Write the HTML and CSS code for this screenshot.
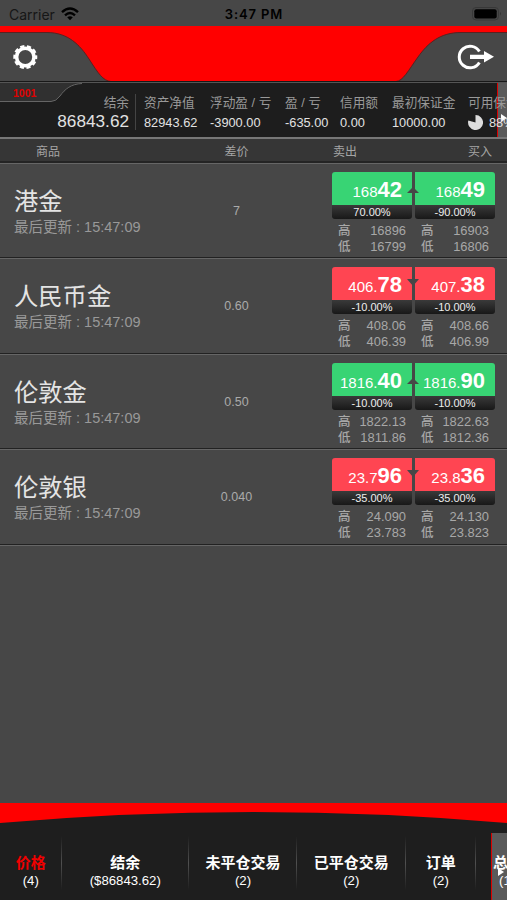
FILE: index.html
```html
<!DOCTYPE html>
<html lang="zh-CN">
<head>
    <meta charset="UTF-8">
    <title>价格</title>
    <link rel="stylesheet" href="styles.css">
</head>
<body>
    <div class="app">
        <div class="status">
            <div class="carrier">
                <span>Carrier</span>
                <svg width="18" height="14" viewBox="0 0 18 14">
                    <g fill="none" stroke="#000" stroke-width="2.4">
                        <path d="M1 5.2Q9 -2.2 17 5.2"/>
                        <path d="M4 8.3Q9 3.9 14 8.3"/>
                    </g>
                    <path d="M6.2 10.3Q9 8.2 11.8 10.3L9 13.2Z"/>
                </svg>
            </div>
            <div class="time">3:47 PM</div>
            <svg class="battery" width="30" height="14" viewBox="0 0 30 14">
                <rect x=".5" y=".5" width="26" height="12.5" rx="3.5" fill="none" stroke="#383838"/>
                <rect x="2.3" y="2.2" width="22.4" height="9.2" rx="2"/>
                <path d="M28 5Q30 6.7 28 8.4Z" fill="#333"/>
            </svg>
        </div>

        <div class="header">
            <svg width="507" height="57" viewBox="0 0 507 57">
                <rect width="507" height="57" fill="#f00"/>
                <path d="M-2 6.5H47C68 6.5 80 19 89 33C98 47 103 55 111 55.5V60H-2Z" fill="#474747" stroke="#5b2020"/>
                <path d="M509 6.5H461C440 6.5 428 17 418 31C408 45 403 55 396 55.5V60H509Z" fill="#474747" stroke="#5b2020"/>
                <rect y="55" width="507" height="1" fill="#181818"/>
                <rect y="56" width="507" height="1" fill="#555"/>
                <!-- 设置 -->
                <circle cx="25.3" cy="31" r="8.7" fill="none" stroke="#fff" stroke-width="3.6"/>
                <circle cx="25.3" cy="31" r="10.8" fill="none" stroke="#fff" stroke-width="2.4" stroke-dasharray="4.2 2.586" stroke-dashoffset="2.1"/>
                <!-- 退出 -->
                <path d="M479.4 25.6A10.8 10.8 0 1 0 479.4 36.4" fill="none" stroke="#fff" stroke-width="3"/>
                <path d="M470 28.7H484V25L494 30.8L484 36.6V32.9H470Z" fill="#fff"/>
            </svg>
        </div>

        <div class="account">
            <svg class="account-tab" width="84" height="20" viewBox="0 0 84 20">
                <path d="M-1 0H82C71 1 65 6 60 13Q56 18.5 51 18.5H-1Z" fill="#303030"/>
                <path d="M82 .5C71 1 65 6 60 13Q56 18.5 51 18.5H-1" fill="none" stroke="#656565"/>
            </svg>
            <span class="account-no">1001</span>
            <div class="balance"><p>结余</p><b>86843.62</b></div>
            <div class="item"><p>资产净值</p><b>82943.62</b></div>
            <div class="item"><p>浮动盈 / 亏</p><b>-3900.00</b></div>
            <div class="item"><p>盈 / 亏</p><b>-635.00</b></div>
            <div class="item"><p>信用额</p><b>0.00</b></div>
            <div class="item"><p>最初保证金</p><b>10000.00</b></div>
            <div class="item over">
                <p>可用保证金</p>
                <b class="usable"><svg width="15" height="15" viewBox="0 0 15 15"><path d="M7.5 7.5V0A7.5 7.5 0 1 1 .3 5.6Z" fill="#ddd"/></svg>88%</b>
            </div>
            <div class="more more-top"><i></i></div>
        </div>

        <div class="thead">
            <span>商品</span><span>差价</span><span>卖出</span><span>买入</span>
        </div>

        <div class="row">
            <div class="name"><h2>港金</h2><p>最后更新 : 15:47:09</p></div>
            <div class="spread">7</div>
            <div class="quotes up">
                <div class="quote">
                    <div class="price">168<b>42</b></div><div class="pct">70.00%</div>
                    <p><em>高</em>16896</p><p><em>低</em>16799</p>
                </div>
                <div class="quote">
                    <div class="price">168<b>49</b></div><div class="pct">-90.00%</div>
                    <p><em>高</em>16903</p><p><em>低</em>16806</p>
                </div>
            </div>
        </div>
        <div class="row">
            <div class="name"><h2>人民币金</h2><p>最后更新 : 15:47:09</p></div>
            <div class="spread">0.60</div>
            <div class="quotes down">
                <div class="quote">
                    <div class="price">406.<b>78</b></div><div class="pct">-10.00%</div>
                    <p><em>高</em>408.06</p><p><em>低</em>406.39</p>
                </div>
                <div class="quote">
                    <div class="price">407.<b>38</b></div><div class="pct">-10.00%</div>
                    <p><em>高</em>408.66</p><p><em>低</em>406.99</p>
                </div>
            </div>
        </div>
        <div class="row">
            <div class="name"><h2>伦敦金</h2><p>最后更新 : 15:47:09</p></div>
            <div class="spread">0.50</div>
            <div class="quotes up">
                <div class="quote">
                    <div class="price">1816.<b>40</b></div><div class="pct">-10.00%</div>
                    <p><em>高</em>1822.13</p><p><em>低</em>1811.86</p>
                </div>
                <div class="quote">
                    <div class="price">1816.<b>90</b></div><div class="pct">-10.00%</div>
                    <p><em>高</em>1822.63</p><p><em>低</em>1812.36</p>
                </div>
            </div>
        </div>
        <div class="row">
            <div class="name"><h2>伦敦银</h2><p>最后更新 : 15:47:09</p></div>
            <div class="spread">0.040</div>
            <div class="quotes down">
                <div class="quote">
                    <div class="price">23.7<b>96</b></div><div class="pct">-35.00%</div>
                    <p><em>高</em>24.090</p><p><em>低</em>23.783</p>
                </div>
                <div class="quote">
                    <div class="price">23.8<b>36</b></div><div class="pct">-35.00%</div>
                    <p><em>高</em>24.130</p><p><em>低</em>23.823</p>
                </div>
            </div>
        </div>

        <div class="footer">
            <svg width="507" height="30" viewBox="0 0 507 30">
                <rect width="507" height="30" fill="#1e1e1e"/>
                <path d="M0 0H507V20Q253.5 -2 0 20Z" fill="#f00"/>
            </svg>
            <div class="tabs">
                <a class="tab on"><b>价格</b><span>(4)</span></a>
                <a class="tab"><b>结余</b><span>($86843.62)</span></a>
                <a class="tab"><b>未平仓交易</b><span>(2)</span></a>
                <a class="tab"><b>已平仓交易</b><span>(2)</span></a>
                <a class="tab"><b>订单</b><span>(2)</span></a>
                <a class="tab last over"><b>总结</b><span>(1)</span></a>
                <div class="more"><i></i></div>
            </div>
        </div>
    </div>
</body>
</html>
```
FILE: styles.css
```css
*{
    margin: 0;
    padding: 0;
    box-sizing: border-box;
}
body{
    background-color: #474747;
    font-family: "Liberation Sans", "Noto Sans CJK SC", sans-serif;
    color: #aaa;
    overflow: hidden;
}
svg{
    display: block;
}
.app{
    width: 507px;
    height: 900px;
    display: flex;
    flex-direction: column;
    overflow: hidden;
}
.status{
    height: 26px;
    flex: none;
    display: grid;
    grid-template-columns: 1fr 80px 1fr;
    align-items: center;
    padding: 2px 5px 0 9px;
    font-family: Inter, sans-serif;
    font-size: 14px;
    color: #000;
}
.carrier{
    display: flex;
    align-items: center;
    gap: 6px;
    color: #161616;
}
.time{
    padding-right: 3px;
    font-size: 13px;
    font-weight: 600;
    letter-spacing: 0.9px;
    text-align: center;
    white-space: nowrap;
}
.battery{
    justify-self: end;
}
.header{
    height: 57px;
    flex: none;
}
.account{
    height: 56px;
    flex: none;
    position: relative;
    display: grid;
    grid-template-columns: 136px 74px 75px 55px 52px 76px 60px;
    padding-top: 11px;
    background-color: #1d1d1d;
    border-bottom: 2px solid #777;
    overflow: hidden;
    white-space: nowrap;
}
.account p{
    font-size: 12.7px;
    line-height: 18px;
    color: #999;
}
.account b{
    display: block;
    font-size: 12.8px;
    font-weight: normal;
    line-height: 21px;
    color: #e2e2e2;
}
.account .balance{
    padding-right: 6px;
    text-align: right;
    height: 36px;
    border-right: 1px solid #444;
}
.account .balance b{
    font-size: 17.2px;
    line-height: 19px;
}
.item:nth-of-type(2){
    padding-left: 8px;
}
.account .usable{
    display: flex;
    align-items: center;
    gap: 6px;
}
.account-tab{
    position: absolute;
    left: 0;
    top: 0;
}
.account-no{
    position: absolute;
    left: 13px;
    top: 4px;
    font-size: 10.5px;
    line-height: 12px;
    font-weight: bold;
    color: #e00000;
}
.over{
    z-index: 1;
}
.more{
    position: absolute;
    right: 0;
    top: 0;
    bottom: 0;
    width: 16px;
    background-color: #5a5a5a;
    border-left: 1px solid #d00;
}
.more i{
    position: absolute;
    left: 6px;
    top: 35px;
    border-left: 6px solid #fff;
    border-top: 4px solid transparent;
    border-bottom: 4px solid transparent;
}
.more-top{
    width: 10px;
}
.more-top i{
    left: 3px;
    top: 31px;
}
.thead{
    height: 24px;
    flex: none;
    display: grid;
    grid-template-columns: 188px 97px 118px 89px;
    background-color: #363636;
    border-bottom: 2px solid #242424;
    font-size: 12px;
    line-height: 27px;
    color: #a5a5a5;
}
.thead span:nth-child(1){
    padding-left: 36px;
}
.thead span:nth-child(2){
    text-align: center;
}
.thead span:nth-child(3){
    padding-left: 48px;
}
.thead span:nth-child(4){
    text-align: right;
}
.row{
    height: 95.4px;
    flex: none;
    display: grid;
    grid-template-columns: 188px 97px 47px 163px;
    border-top: 1px solid #666;
    border-bottom: 1px solid #222;
}
.row:nth-of-type(8){
    box-shadow: 0 1px #666;
}
.name{
    padding: 22px 0 0 14px;
}
.name h2{
    font-size: 24.3px;
    font-weight: normal;
    line-height: 31px;
    color: #e4e4e4;
}
.name p{
    font-size: 14.5px;
    line-height: 20px;
    color: #999;
}
.spread{
    padding-top: 39px;
    font-size: 12.5px;
    line-height: 16px;
    text-align: center;
}
.quotes{
    grid-column: 4;
    position: relative;
    display: grid;
    grid-template-columns: 80px 80px;
    gap: 3px;
    padding-top: 8px;
}
.price{
    height: 33px;
    padding-right: 10px;
    text-align: right;
    font-size: 15px;
    line-height: 35px;
    color: #fff;
    white-space: nowrap;
}
.price b{
    font-size: 22px;
}
.up .price{
    background-color: #38d474;
}
.down .price{
    background-color: #ff4552;
}
.quote:first-child .price{
    border-radius: 3px 0 0 0;
}
.quote:last-child .price{
    border-radius: 0 3px 0 0;
}
.pct{
    height: 14px;
    margin-bottom: 4px;
    border-radius: 0 0 3px 3px;
    background-image: linear-gradient(#3a3a3a, #181818);
    font-size: 11px;
    line-height: 15px;
    text-align: center;
    color: #eee;
}
.quote p{
    display: flex;
    justify-content: space-between;
    padding: 0 6px;
    font-size: 12.9px;
    line-height: 16px;
    color: #a8a8a8;
}
.quote em{
    font-size: 12.5px;
    font-style: normal;
    font-weight: 500;
}
/* 涨跌箭头 */
.quotes::after{
    content: "";
    position: absolute;
    left: 75px;
    top: 23px;
    border-left: 6.5px solid transparent;
    border-right: 6.5px solid transparent;
}
.up::after{
    border-bottom: 6px solid #474747;
}
.down::after{
    border-top: 7px solid #474747;
    margin-top: -3px;
}
.footer{
    flex: none;
    margin-top: auto;
    height: 97px;
    background-color: #1e1e1e;
}
.tabs{
    position: relative;
    height: 67px;
    display: grid;
    grid-template-columns: 61.5px 127.5px 108px 108.5px 70.5px 60px;
    overflow: hidden;
}
.tab{
    display: flex;
    flex-direction: column;
    align-items: center;
    padding-top: 20px;
    height: 60px;
    color: #fff;
    white-space: nowrap;
    background: linear-gradient(#1e1e1e, #505050 50%, #1e1e1e) right / 1px 54px no-repeat;
}
.tab b{
    font-size: 15px;
    line-height: 20px;
}
.tab span{
    font-size: 13.2px;
    line-height: 15px;
}
.tab.on b{
    color: #f00000;
}
.tab.last{
    align-items: flex-start;
    padding-left: 17px;
}
.last span{
    padding-left: 6px;
}
```
